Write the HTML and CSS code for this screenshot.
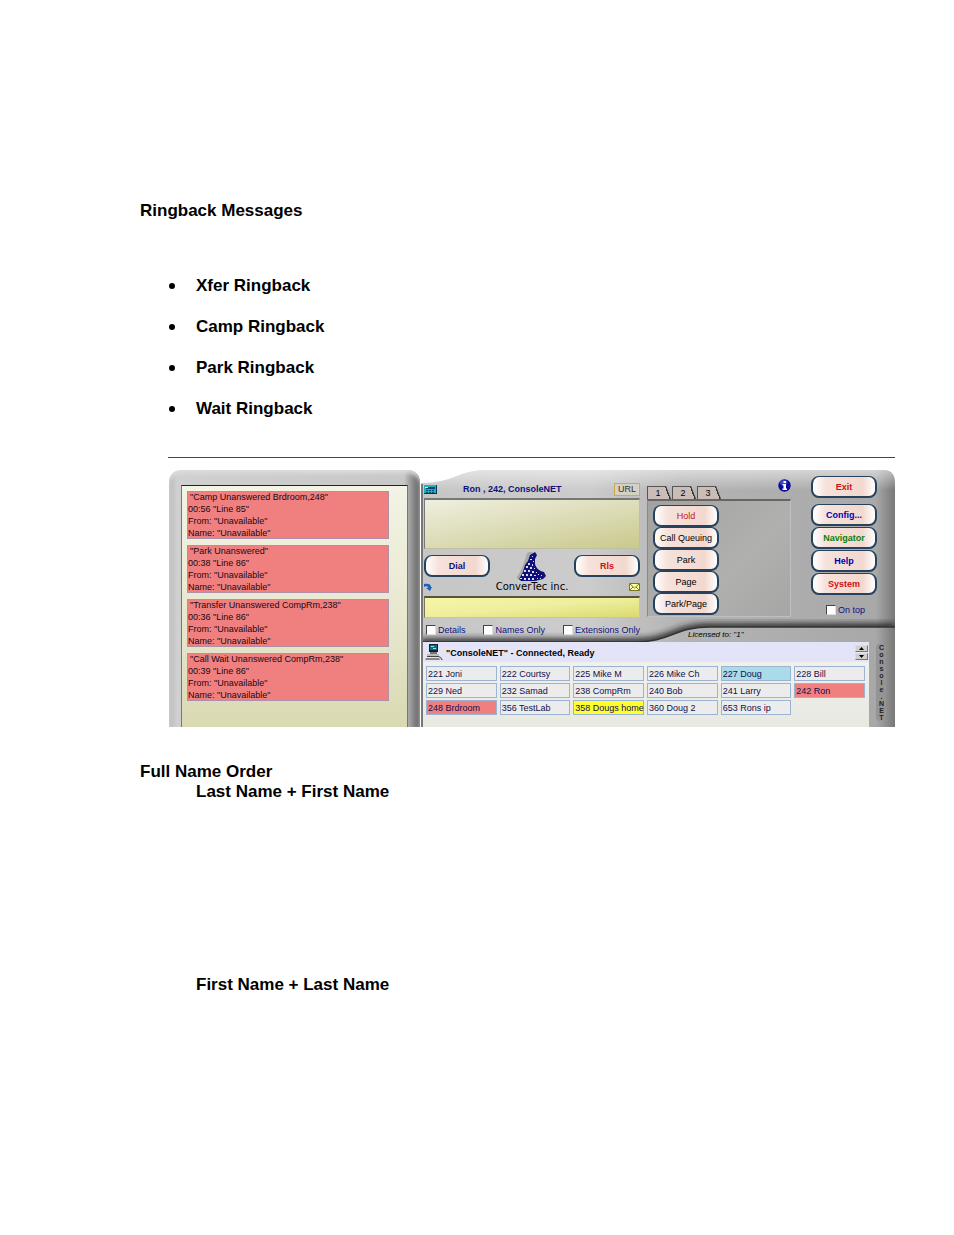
FILE: index.html
```
<!DOCTYPE html>
<html lang="en">
<head>
  <meta charset="UTF-8" />
  <title>Ringback Messages</title>
  <link rel="stylesheet" href="styles.css">
</head>
<body>

  <main class="page">
    <h2>Ringback Messages</h2>

    <ul class="ringbacks">
      <li>Xfer Ringback</li>
      <li>Camp Ringback</li>
      <li>Park Ringback</li>
      <li>Wait Ringback</li>
    </ul>

    <div class="figure">
      <div class="console">

        <!-- Ringback messages -->
        <section class="side-panel">
          <div class="messages">
            <div class="message">
              <p class="first">"Camp Unanswered Brdroom,248"</p>
              <p>00:56 "Line 85"</p>
              <p>From: "Unavailable"</p>
              <p>Name: "Unavailable"</p>
            </div>
            <div class="message">
              <p class="first">"Park Unanswered"</p>
              <p>00:38 "Line 86"</p>
              <p>From: "Unavailable"</p>
              <p>Name: "Unavailable"</p>
            </div>
            <div class="message">
              <p class="first">"Transfer Unanswered CompRm,238"</p>
              <p>00:36 "Line 86"</p>
              <p>From: "Unavailable"</p>
              <p>Name: "Unavailable"</p>
            </div>
            <div class="message">
              <p class="first">"Call Wait Unanswered CompRm,238"</p>
              <p>00:39 "Line 86"</p>
              <p>From: "Unavailable"</p>
              <p>Name: "Unavailable"</p>
            </div>
          </div>
        </section>

        <section class="main-panel">
          <!-- Metal case behind the controls -->
          <svg class="case" viewBox="0 0 475 257" preserveAspectRatio="none" aria-hidden="true">
            <defs>
              <linearGradient id="metal" x1="0" x2="1" y1="0" y2="0">
                <stop offset="0" stop-color="#c6c6c6" />
                <stop offset="0.35" stop-color="#cccccc" />
                <stop offset="0.55" stop-color="#b4b4b4" />
                <stop offset="0.96" stop-color="#a8a8a8" />
                <stop offset="1" stop-color="#787878" />
              </linearGradient>
              <linearGradient id="topLight" x1="0" x2="0" y1="0" y2="1">
                <stop offset="0" stop-color="#ffffff" stop-opacity="0.5" />
                <stop offset="1" stop-color="#ffffff" stop-opacity="0" />
              </linearGradient>
              <filter id="soft" x="-5%" y="-50%" width="110%" height="200%">
                <feGaussianBlur stdDeviation="3" />
              </filter>
              <clipPath id="upper">
                <path d="M1 13C34 13 38 0 68 0H463Q475 0 475 13V157H290C255 157 250 172 215 172H1z" />
              </clipPath>
            </defs>
            <path d="M1 13C34 13 38 0 68 0H463Q475 0 475 13V257H1z" fill="url(#metal)" />
            <path d="M1 13C34 13 38 0 68 0H463Q475 0 475 13V20H1z" fill="url(#topLight)" />
            <g clip-path="url(#upper)">
              <path d="M0 172H215C250 172 255 157 290 157H475" fill="none" stroke="#222" stroke-width="7" filter="url(#soft)" />
            </g>
            <path d="M1 172H215C250 172 255 157 290 157H475" fill="none" stroke="#333" stroke-width="1.5" />
            <path d="M2 14V257" stroke="#777" stroke-width="2" />
          </svg>

          <div class="deck">
            <div class="call">
              <div class="call-head">
                <svg width="13" height="11" viewBox="0 0 13 11" aria-hidden="true">
                  <path d="M0 1H12V10H0z" fill="#19b5c4" />
                  <path d="M2 3H11V5H2zM2 6h2v1H2zM5 6h2v1H5zM8 6h2v1H8zM2 8h2v1H2zM5 8h2v1H5zM8 8h2v1H8z" fill="#064468" />
                  <path d="M0 10H13V1h-1v8H0z" fill="#06355c" />
                  <path d="M1 3h3v1H1z" fill="#d7ffff" />
                </svg>
                <strong>Ron , 242, ConsoleNET</strong>
                <button class="url">URL</button>
              </div>
              <div class="lcd"></div>
              <div class="call-buttons">
                <button class="pill navy">Dial</button>
                <div class="logo">
                  <svg width="30" height="29" viewBox="0 0 30 29" aria-hidden="true">
                    <path d="M13 2L18 0L20 6C18 13 21 18 29 23L25 28L16 26L10 29L1 28C7 22 10 12 13 2z" fill="#777" opacity="0.4" transform="translate(-3 -1)" />
                    <path d="M13 3L18 0L20 3L18 7V12C19 16 22 19 27 20L29 24L26 27L18 29H4L2 27L6 20L8 13L11 9z" fill="#10107c" />
                    <path d="M15 4h1v1h-1zM13 7h2v1h-2zM16 9h1v1h-1zM11 11h2v2h-2zM15 12h1v2h-1zM9 14h2v2H9zM13 15h2v2h-2zM17 16h1v1h-1zM7 18h2v2H7zM11 18h2v2h-2zM15 19h2v2h-2zM19 20h1v1h-1zM5 22h2v2H5zM9 22h2v2H9zM13 22h2v2h-2zM17 23h2v1h-2zM21 22h1v1h-1zM24 23h1v1h-1zM3 26h2v1H3zM7 26h2v2H7zM11 26h2v2h-2zM15 26h2v2h-2zM20 26h1v1h-1zM23 26h1v1h-1z" fill="#dcdcec" />
                  </svg>
                  <span>ConverTec inc.</span>
                </div>
                <button class="pill red">Rls</button>
              </div>
              <div class="call-icons">
                <svg width="8" height="8" viewBox="0 0 8 8" aria-hidden="true">
                  <path d="M0 1C4 0 7 1 7 4H8L6 8L2 5H4C4 3 2 3 0 4z" fill="#1c62b8" />
                </svg>
                <svg width="11" height="8" viewBox="0 0 11 8" aria-hidden="true">
                  <path d="M0.5 0.5H10.5V7.5H0.5z" fill="#ffffa0" stroke="#77772a" />
                  <path d="M1 1L5.5 5L10 1M1 7L4 4M10 7L7 4" fill="none" stroke="#77772a" />
                </svg>
              </div>
              <input class="number" type="text" aria-label="Number">
              <div class="checks">
                <label><input type="checkbox">Details</label>
                <label><input type="checkbox">Names Only</label>
                <label><input type="checkbox">Extensions Only</label>
              </div>
            </div>

            <div class="features">
              <div class="tabs">
                <button>1</button>
                <button>2</button>
                <button>3</button>
                <svg class="info" width="13" height="13" viewBox="0 0 13 13" aria-hidden="true">
                  <circle cx="6.5" cy="6.5" r="6.2" fill="#0a0a9c" />
                  <ellipse cx="5.5" cy="3.5" rx="4" ry="2.5" fill="#5a6ae0" opacity="0.6" />
                  <path d="M5.5 2H8V4H5.5zM4.5 5H8V9.5H9V11H4.5V9.5H5.5V6.5H4.5z" fill="#fff" />
                </svg>
              </div>
              <div class="feature-list">
                <button class="pill plain dark-red">Hold</button>
                <button class="pill plain">Call Queuing</button>
                <button class="pill plain">Park</button>
                <button class="pill plain">Page</button>
                <button class="pill plain">Park/Page</button>
              </div>
            </div>

            <div class="system">
              <button class="pill red exit">Exit</button>
              <button class="pill blue">Config...</button>
              <button class="pill green">Navigator</button>
              <button class="pill blue">Help</button>
              <button class="pill red">System</button>
              <label class="on-top"><input type="checkbox">On top</label>
            </div>
          </div>

          <p class="licensed">Licensed to: "1"</p>

          <div class="lower">
            <div class="stations">
              <div class="status">
                <svg width="18" height="17" viewBox="0 0 18 17" aria-hidden="true">
                  <path d="M4 0H13V8H4z" fill="#123" />
                  <path d="M5 1H12V6H5z" fill="#0b6d8c" />
                  <path d="M6 2H9V3H6zM8 4H11V5H8z" fill="#8fe8ee" />
                  <path d="M5 8H12V10H5z" fill="#777" />
                  <path d="M2 10H14V13H2z" fill="#bbb" />
                  <path d="M2 12H14V13H2z" fill="#444" />
                  <path d="M1 14H14L15 16H0z" fill="#888" />
                  <path d="M14 13C17 13 15 15 17 15V16" fill="none" stroke="#333" />
                </svg>
                <strong>"ConsoleNET" - Connected, Ready</strong>
                <div class="spinner">
                  <button aria-label="Up"><svg width="5" height="3" viewBox="0 0 5 3"><path d="M0 3L2.5 0L5 3z" /></svg></button>
                  <button aria-label="Down"><svg width="5" height="3" viewBox="0 0 5 3"><path d="M0 0L2.5 3L5 0z" /></svg></button>
                </div>
              </div>
              <div class="station-grid">
                <button>221 Joni</button>
                <button>222 Courtsy</button>
                <button>225 Mike M</button>
                <button>226 Mike Ch</button>
                <button class="cyan">227 Doug</button>
                <button>228 Bill</button>
                <button>229 Ned</button>
                <button>232 Samad</button>
                <button>238 CompRm</button>
                <button>240 Bob</button>
                <button>241 Larry</button>
                <button class="busy">242 Ron</button>
                <button class="busy">248 Brdroom</button>
                <button>356 TestLab</button>
                <button class="yellow">358 Dougs home</button>
                <button>360 Doug 2</button>
                <button>653 Rons ip</button>
              </div>
            </div>
            <div class="brand"><span>Console.NET</span></div>
          </div>
        </section>

      </div>
    </div>

    <h2>Full Name Order</h2>
    <h3>Last Name + First Name</h3>
    <h3 class="second">First Name + Last Name</h3>
  </main>

</body>
</html>
```

FILE: styles.css
```
* {
  box-sizing: border-box;
}

body {
  margin: 0;
  background: #fff;
  color: #000;
  font-family: "Liberation Sans", Arial, sans-serif;
}

.page {
  padding: 201px 59px 240px 140px;
}

h2, h3 {
  margin: 0;
  font-size: 17px;
  line-height: 20px;
}

h3 {
  padding-left: 56px;
}

h3.second {
  margin-top: 173px;
}

.ringbacks {
  list-style: none;
  margin: 55px 0 0 28px;
  padding: 0;
  display: grid;
  gap: 21px;
  font-size: 17px;
  font-weight: bold;
  line-height: 20px;
}

.ringbacks li {
  display: flex;
  align-items: center;
}

.ringbacks li::before {
  content: "";
  width: 6px;
  height: 6px;
  margin: 0 21px 0 1px;
  border-radius: 50%;
  background: #000;
}

.figure {
  margin: 38px 0 35px 28px;
  padding-top: 12px;
  border-top: 1px solid #444450;
}

/* Console window */
.console {
  display: grid;
  grid-template-columns: 252px 1fr;
  font-size: 9px;
  line-height: 12px;
}

.console p {
  margin: 0;
}

.console button {
  font-family: inherit;
  font-size: 9px;
  line-height: 12px;
  padding: 0;
  cursor: pointer;
}

.side-panel {
  display: flex;
  margin-left: 1px;
  padding: 15px 12px 0;
  border-radius: 12px 12px 0 0;
  background: linear-gradient(to right, #b8b8b8, #d0d0d0 8px, #c8c8c8 235px, #777 247px, #555);
  box-shadow: inset 0 3px 4px #ddd;
}

.messages {
  flex: 1;
  display: flex;
  flex-direction: column;
  gap: 6px;
  padding: 5px 18px 0 5px;
  border: 1px solid #777;
  border-top-color: #222;
  border-bottom: 0;
  background: linear-gradient(to bottom, #f3f3e6, #e9e9d2 50%, #d9d9b2);
}

.message {
  color: #200a10;
  background: #f08080;
  box-shadow: inset 0 0 0 1px #b090a8;
  padding-left: 1px;
  white-space: nowrap;
}

.message .first {
  padding-left: 2px;
}

.main-panel {
  position: relative;
  display: flex;
  flex-direction: column;
}

.case {
  position: absolute;
  inset: 0;
  width: 100%;
  height: 100%;
}

.deck {
  position: relative;
  display: flex;
  height: 158px;
  padding: 0 18px 0 4px;
}

.call {
  width: 216px;
  padding-top: 12px;
}

.call-head {
  display: flex;
  align-items: center;
  gap: 26px;
  height: 14px;
  color: #10107c;
}

.console .url {
  height: 13px;
  margin-left: auto;
  padding: 0 3px;
  border: 1px solid #d0a850;
  background: #d4d0c4;
  color: #333;
  line-height: 11px;
}

.lcd {
  height: 51px;
  margin-top: 2px;
  border: 1px solid #c0c0a0;
  border-top: 2px solid #777;
  border-left-color: #777;
  background: linear-gradient(170deg, #efefdf, #dddcb8 50%, #c9c98c);
}

.call-buttons {
  display: flex;
  justify-content: space-between;
  height: 33px;
  padding-top: 6px;
}

.console .pill {
  width: 66px;
  height: 22px;
  border: 2px solid #26425e;
  border-top-width: 1px;
  border-radius: 8px;
  background: linear-gradient(to right, #fff, #f6e2db 20%, #f2d8cf 80%, #fff);
  font-weight: bold;
  color: #000;
  white-space: nowrap;
}

.console .plain {
  font-weight: normal;
}

.console .navy {
  color: #10107c;
}

.console .blue {
  color: #0000b4;
}

.console .red {
  color: #d01010;
}

.console .green {
  color: #0a800a;
}

.console .dark-red {
  color: #c01818;
}

.logo {
  display: flex;
  flex-direction: column;
  align-items: center;
  width: 80px;
  margin-top: -3px;
}

.logo svg {
  flex: none;
}

.logo span {
  padding-top: 2px;
  font-family: "DejaVu Sans", sans-serif;
  font-size: 10px;
  line-height: 8px;
  white-space: nowrap;
}

.call-icons {
  display: flex;
  justify-content: space-between;
  align-items: center;
  height: 10px;
  margin-bottom: 4px;
}

.number {
  display: block;
  width: 100%;
  height: 22px;
  border: 1px solid #c8c890;
  border-top: 2px solid #55553a;
  border-left-color: #77775a;
  background: linear-gradient(175deg, #f6f6a8, #eeee9c 50%, #dada70);
}

.checks {
  display: flex;
  justify-content: space-between;
  margin-top: 6px;
  padding-left: 2px;
}

.checks label, .on-top {
  display: flex;
  align-items: center;
  gap: 2px;
  color: #10107c;
  white-space: nowrap;
}

.main-panel input[type="checkbox"] {
  appearance: none;
  width: 10px;
  height: 10px;
  margin: 0;
  border: 1px solid #ddd;
  border-top-color: #444;
  border-left-color: #444;
  background: #fff;
}

.features {
  flex: 1;
  margin: 0 20px 0 7px;
  padding-top: 9px;
}

.tabs {
  display: flex;
  align-items: flex-end;
  gap: 1px;
  height: 20px;
}

/* slanted right edge */
.console .tabs button {
  width: 24px;
  height: 13px;
  border: 0;
  padding-right: 2px;
  box-shadow: inset 1px 1px 0 #555;
  clip-path: polygon(0 0, 19px 0, 100% 100%, 0 100%);
  background: linear-gradient(69deg, #ccbcb6 calc(100% - 6px), #333 calc(100% - 6px));
}

.tabs .info {
  margin-left: auto;
  align-self: flex-start;
}

.feature-list {
  display: flex;
  flex-direction: column;
  height: 118px;
  padding: 4px 5px;
  border-top: 2px solid #666;
  border-left: 1px solid #888;
  border-right: 1px solid #c0c0c0;
  border-bottom: 1px solid #c0c0c0;
  background: linear-gradient(135deg, #a2a2a0, #b0b0ae 60%, #a6a6a4);
}

.feature-list .pill {
  flex: none;
}

.system {
  display: flex;
  flex-direction: column;
  gap: 1px;
  padding-top: 6px;
}

.system .exit {
  margin-bottom: 5px;
}

.on-top {
  margin: 8px 0 0 15px;
}

.console .licensed {
  position: relative;
  margin-left: 268px;
  height: 14px;
  line-height: 14px;
  font-size: 8px;
  font-style: italic;
}

.lower {
  position: relative;
  display: flex;
  height: 85px;
}

.stations {
  flex: 1;
  margin-left: 3px;
  background: linear-gradient(#f2f2f0, #e9e9e2);
}

.status {
  display: flex;
  align-items: center;
  gap: 3px;
  height: 20px;
  padding: 1px 1px 0 2px;
  background: #e4e4f8;
}

.spinner {
  display: grid;
  gap: 1px;
  margin-left: auto;
}

.console .spinner button {
  display: flex;
  align-items: center;
  justify-content: center;
  width: 13px;
  height: 7px;
  border: 1px solid #777;
  border-top-color: #ddd;
  border-left-color: #ddd;
  background: #d4d0c8;
}

.station-grid {
  display: grid;
  grid-template-columns: repeat(6, 1fr);
  gap: 2px 3px;
  padding: 4px 4px 0 3px;
}

.station-grid button {
  min-width: 0;
  height: 15px;
  border: 1px solid #9cb4d4;
  background: #ececec;
  color: #10104c;
  text-align: left;
  white-space: nowrap;
}

.console .station-grid button {
  padding-left: 1px;
}

.station-grid .cyan {
  background: #a8dce8;
}

.station-grid .busy {
  background: #f08080;
}

.station-grid .yellow {
  background: #ffff30;
}

.brand {
  width: 26px;
  padding: 2px 0 0 7px;
}

.brand span {
  display: block;
  width: 10px;
  border-radius: 4px;
  background: #949494;
  writing-mode: vertical-rl;
  text-orientation: upright;
  font-size: 7px;
  line-height: 10px;
  font-weight: bold;
  color: #222;
}
```
